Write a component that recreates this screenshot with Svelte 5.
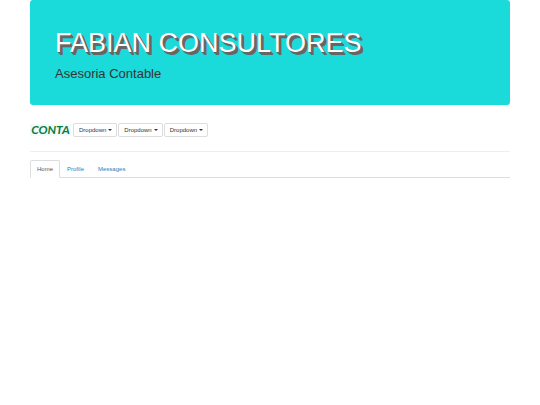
<script>
  const menus = ['Dropdown', 'Dropdown', 'Dropdown'];
  const tabs = ['Home', 'Profile', 'Messages'];
  let active = $state('Home');
</script>

<div class="container">
  <header class="jumbotron">
    <h1>FABIAN CONSULTORES</h1>
    <p>Asesoria Contable</p>
  </header>

  <div class="toolbar">
    <a class="logo" href="#home">CONTA</a>
    {#each menus as menu}
      <button type="button" class="btn" aria-haspopup="true">
        {menu}<span class="caret"></span>
      </button>
    {/each}
  </div>

  <hr />

  <nav class="tabs">
    {#each tabs as tab}
      <a href="#{tab.toLowerCase()}" class:active={active === tab} onclick={() => (active = tab)}>{tab}</a>
    {/each}
  </nav>
</div>

<style>
  :global(body) {
    margin: 0;
    background: #fff;
  }

  .container {
    margin: 0 30px;
    font-family: "Liberation Sans", Arial, sans-serif;
    font-size: 6px;
    line-height: 8px;
    color: #333;
  }

  .jumbotron {
    padding: 28px 25px 23px;
    border-radius: 3px;
    background: #1bdada;
  }

  h1 {
    margin: 0;
    font-size: 27px;
    line-height: 30px;
    font-weight: 400;
    color: #fff;
    text-shadow: 1px 1px 0 #666, 2px 2px 0 #666, 3px 3px 0 #666;
  }

  p {
    margin: 8px 0 0;
    font-size: 13px;
    line-height: 16px;
  }

  .toolbar {
    display: flex;
    align-items: center;
    gap: 1px;
    margin-top: 18px;
  }

  .logo {
    box-sizing: border-box;
    width: 41px;
    margin-right: 1px;
    background: #f0fafa;
    color: #0b7a3e;
    font-family: Lato, sans-serif;
    font-size: 12px;
    line-height: 12px;
    font-weight: 700;
    font-style: italic;
    text-align: center;
    text-decoration: none;
  }

  .btn {
    display: flex;
    align-items: center;
    gap: 2px;
    padding: 2px 4px 2px 5px;
    border: 1px solid #ddd;
    border-radius: 2px;
    background: #fff;
    color: #333;
    font: inherit;
    line-height: 8px;
  }

  .caret {
    border: 2px solid transparent;
    border-top-color: #333;
    border-bottom: 0;
  }

  hr {
    margin: 14px 0 8px;
    border: 0;
    border-top: 1px solid #eee;
  }

  .tabs {
    display: flex;
    border-bottom: 1px solid #ddd;
  }

  .tabs a {
    margin-bottom: -1px;
    padding: 4px 6px;
    border: 1px solid transparent;
    border-radius: 2px 2px 0 0;
    color: #337ab7;
    text-decoration: none;
  }

  .tabs a.active {
    border-color: #ddd #ddd #fff;
    background: #fff;
    color: #555;
  }
</style>
